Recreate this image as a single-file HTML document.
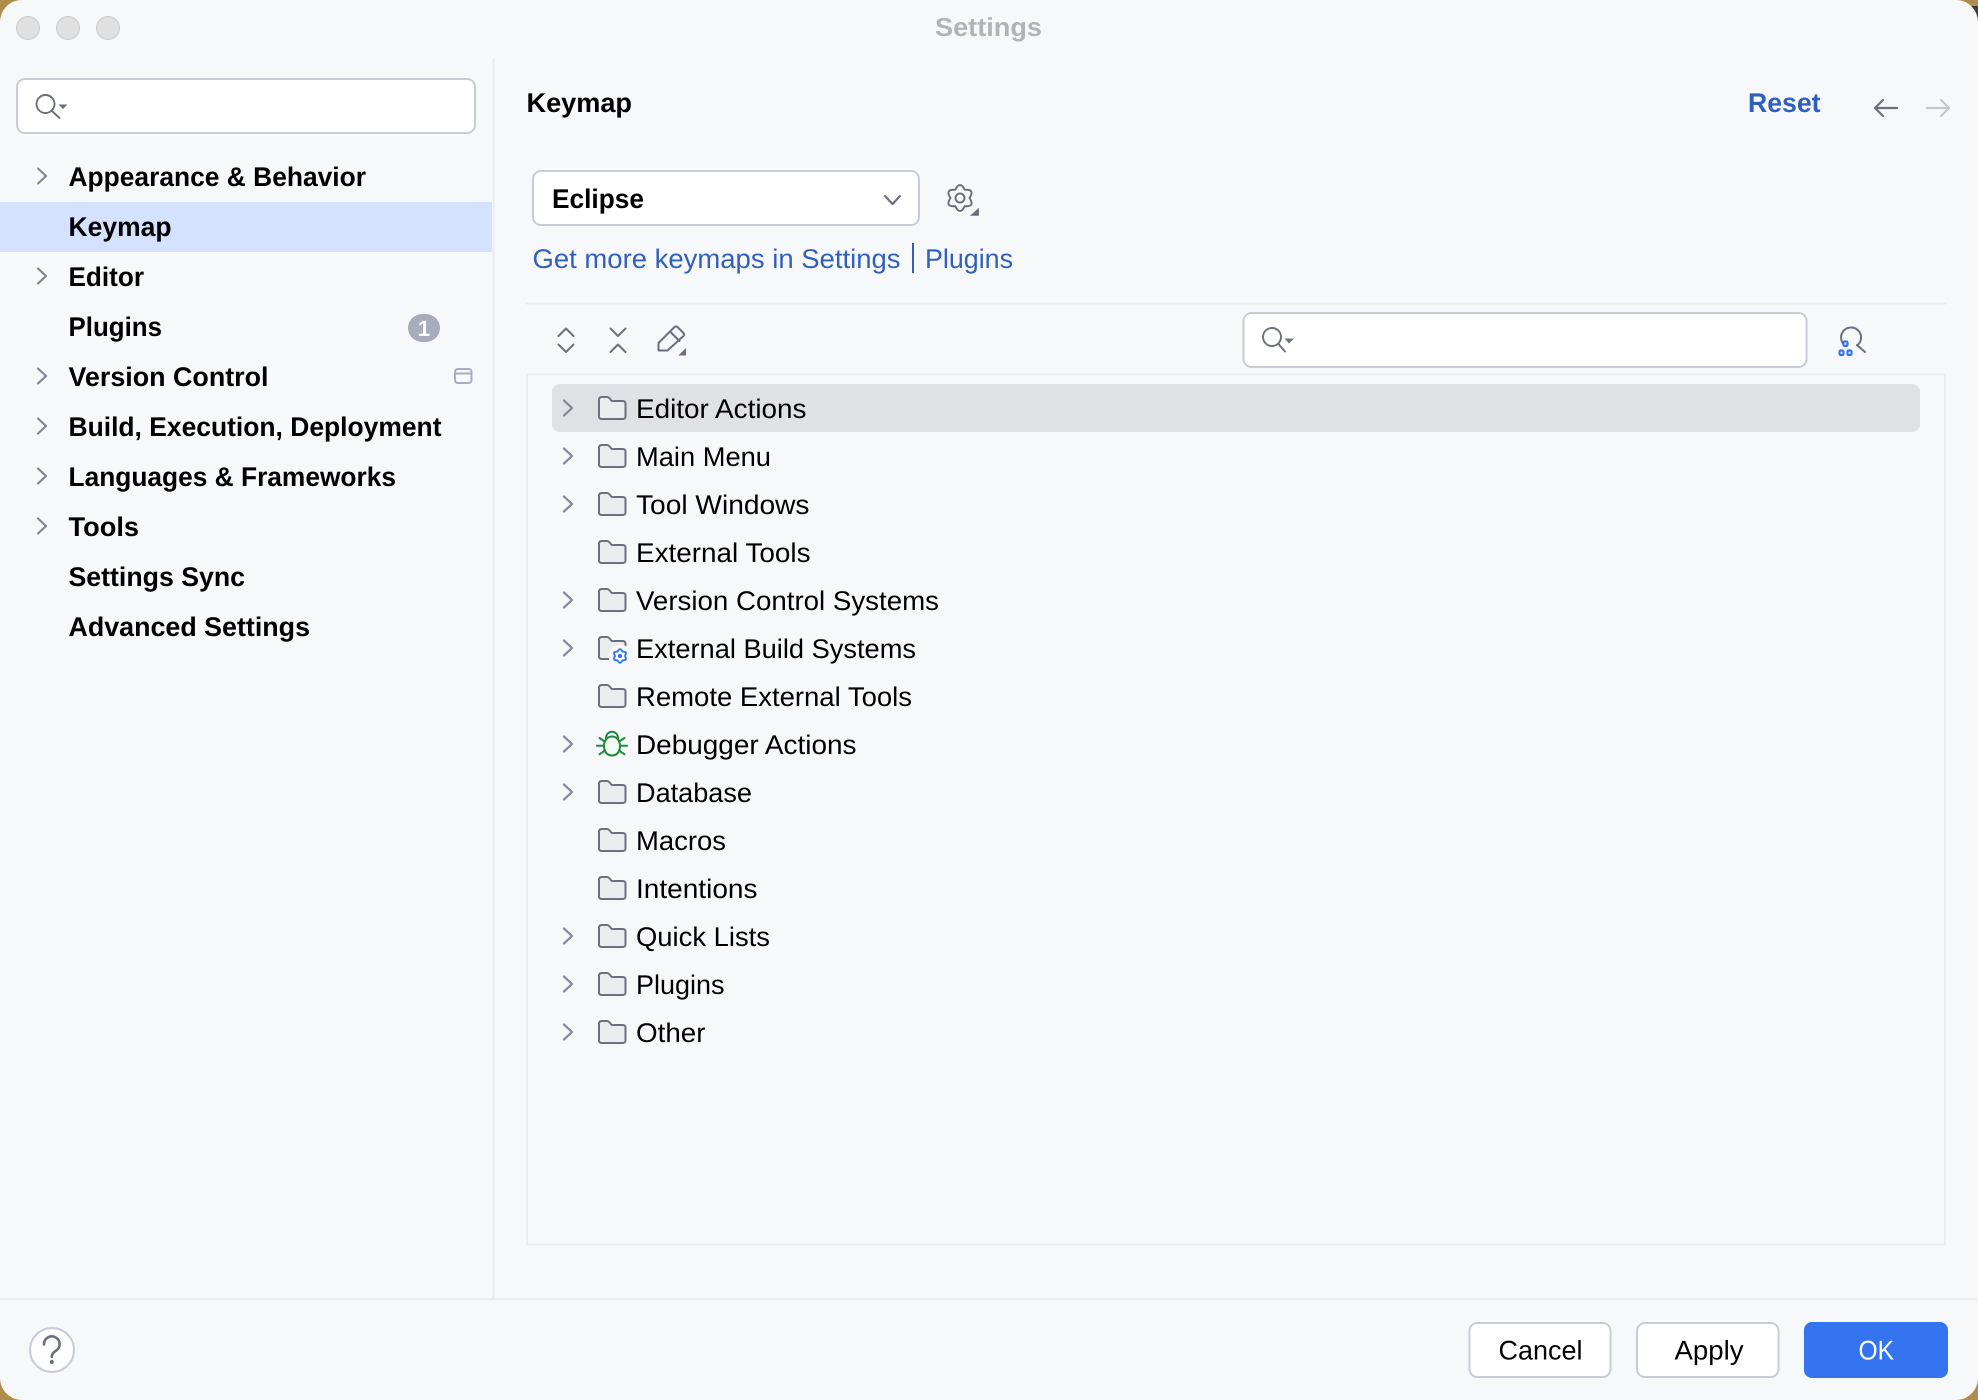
<!DOCTYPE html>
<html lang="en"><head><meta charset="utf-8"><title>Settings</title>
<style>
html,body{margin:0;padding:0;width:1978px;height:1400px;overflow:hidden;background:#b08c4c}
svg{display:block}
text{font-family:"Liberation Sans",sans-serif;font-size:27px;fill:#000;text-rendering:geometricPrecision}
.b{font-weight:700}
.l{fill:#315fbd}
.ic{fill:none;stroke:#6c707e;stroke-width:2;stroke-linecap:round;stroke-linejoin:round}
.ch{fill:none;stroke:#818594;stroke-width:2.2;stroke-linecap:round;stroke-linejoin:round}
.f{fill:#ebecf0;stroke:#6c707e;stroke-width:2;stroke-linejoin:round}
.fld{fill:#fff;stroke:#c9ccd6;stroke-width:2}
</style></head><body>
<svg xmlns="http://www.w3.org/2000/svg" width="1978" height="1400" viewBox="0 0 1978 1400">
<defs>
<path id="folder" d="M1,20 V3 a2.5,2.5 0 0 1 2.5,-2.5 h5.5 a3,3 0 0 1 2.2,1 l2.6,3 h11.2 a2.5,2.5 0 0 1 2.5,2.5 v13 a2.5,2.5 0 0 1 -2.5,2.5 h-21.5 a2.5,2.5 0 0 1 -2.5,-2.5 z"/>
<path id="chev" d="M0,-7.5 L8,0 L0,7.5"/>
<path id="gear" d="M4.75,-8.2 Q0,-17.8 -4.75,-8.2 Q-15.4,-8.9 -9.5,0 Q-15.4,8.9 -4.75,8.2 Q0,17.8 4.75,8.2 Q15.4,8.9 9.5,0 Q15.4,-8.9 4.75,-8.2 Z"/>
</defs>

<!-- window -->
<rect x="1970" y="6" width="8" height="34" fill="#3c3a38"/>
<rect x="0" y="0" width="1978" height="1400" rx="22" ry="22" fill="#f7f8fa"/>

<!-- title bar -->
<circle cx="28" cy="28" r="11.5" fill="#e0e0e0" stroke="#d0d0d0" stroke-width="1.2"/>
<circle cx="68" cy="28" r="11.5" fill="#e0e0e0" stroke="#d0d0d0" stroke-width="1.2"/>
<circle cx="108" cy="28" r="11.5" fill="#e0e0e0" stroke="#d0d0d0" stroke-width="1.2"/>
<text class="b" x="935" y="36" textLength="107" lengthAdjust="spacingAndGlyphs" style="fill:#b2b3b5;font-size:26px">Settings</text>

<!-- dividers -->
<rect x="492.5" y="58" width="2" height="1241" fill="#ebecf0"/>
<rect x="0" y="1298" width="1978" height="2" fill="#ebecf0"/>

<!-- sidebar search -->
<rect class="fld" x="17" y="79" width="458" height="54" rx="8"/>
<circle class="ic" cx="45.5" cy="104" r="9" style="stroke-width:1.9"/>
<path class="ic" d="M52,111 L59.5,118" style="stroke-width:1.9"/>
<path d="M58.5,104.5 H67.5 L63,109 Z" fill="#6c707e"/>

<!-- sidebar items -->
<rect x="0" y="202" width="492" height="50" fill="#d4e2ff"/>
<use href="#chev" class="ch" x="38" y="176"/>
<use href="#chev" class="ch" x="38" y="276"/>
<use href="#chev" class="ch" x="38" y="376"/>
<use href="#chev" class="ch" x="38" y="426"/>
<use href="#chev" class="ch" x="38" y="476"/>
<use href="#chev" class="ch" x="38" y="526"/>
<text class="b" x="68.5" y="186" textLength="297.5" lengthAdjust="spacingAndGlyphs">Appearance &amp; Behavior</text>
<text class="b" x="68.5" y="236" textLength="103" lengthAdjust="spacingAndGlyphs">Keymap</text>
<text class="b" x="68.5" y="286" textLength="75.5" lengthAdjust="spacingAndGlyphs">Editor</text>
<text class="b" x="68.5" y="336" textLength="93.5" lengthAdjust="spacingAndGlyphs">Plugins</text>
<text class="b" x="68.5" y="386" textLength="200" lengthAdjust="spacingAndGlyphs">Version Control</text>
<text class="b" x="68.5" y="436" textLength="373" lengthAdjust="spacingAndGlyphs">Build, Execution, Deployment</text>
<text class="b" x="68.5" y="486" textLength="327.5" lengthAdjust="spacingAndGlyphs">Languages &amp; Frameworks</text>
<text class="b" x="68.5" y="536" textLength="70.5" lengthAdjust="spacingAndGlyphs">Tools</text>
<text class="b" x="68.5" y="586" textLength="176.5" lengthAdjust="spacingAndGlyphs">Settings Sync</text>
<text class="b" x="68.5" y="636" textLength="241.5" lengthAdjust="spacingAndGlyphs">Advanced Settings</text>
<rect x="408" y="314" width="32" height="28" rx="14" fill="#a8adbd"/>
<text class="b" x="424" y="336" text-anchor="middle" style="fill:#fff;font-size:22px">1</text>
<rect x="455" y="369" width="16.5" height="14" rx="3" fill="none" stroke="#a8adbd" stroke-width="2"/>
<path d="M455,373.5 H471.5" stroke="#a8adbd" stroke-width="2"/>

<!-- header -->
<text class="b" x="526.5" y="112" textLength="105.5" lengthAdjust="spacingAndGlyphs">Keymap</text>
<text class="b l" x="1748" y="112" textLength="72.5" lengthAdjust="spacingAndGlyphs">Reset</text>
<path class="ic" d="M1897,108 H1875 M1883,100 L1875,108 L1883,116" style="stroke-width:2.2"/>
<path class="ic" d="M1927,108 H1949 M1941,100 L1949,108 L1941,116" style="stroke:#c6c7ca;stroke-width:2.2"/>

<!-- keymap combo -->
<rect class="fld" x="533" y="171" width="386" height="54" rx="8"/>
<text class="b" x="552" y="208" textLength="92" lengthAdjust="spacingAndGlyphs">Eclipse</text>
<path class="ch" d="M885,196 L892.5,204 L900,196" style="stroke:#6c707e"/>
<use href="#gear" class="ic" x="960" y="198"/>
<circle class="ic" cx="960" cy="198" r="4.5"/>
<path d="M970,215.7 H979 V207.7 Z" fill="#6c707e"/>

<!-- links -->
<text class="l" x="532.5" y="268" textLength="368" lengthAdjust="spacingAndGlyphs">Get more keymaps in Settings</text>
<rect x="912" y="243" width="2" height="30" fill="#315fbd"/>
<text class="l" x="925" y="268" textLength="88" lengthAdjust="spacingAndGlyphs">Plugins</text>

<rect x="526" y="302.5" width="1420" height="2" fill="#ebecf0"/>

<!-- toolbar -->
<path class="ic" d="M558.5,336 L566,328.5 L573.5,336 M558.5,344.5 L566,352 L573.5,344.5"/>
<path class="ic" d="M610.5,328.5 L618,336 L625.5,328.5 M610.5,352 L618,344.5 L625.5,352"/>
<path class="ic" d="M658.5,350.5 V343 L674.5,327 a2.2,2.2 0 0 1 3,0 l6,6 a2.2,2.2 0 0 1 0,3 L667.5,350.5 Z M670,331.5 L679.5,341"/>
<path d="M678.3,355.5 H686 V348 Z" fill="#6c707e"/>

<!-- keymap search -->
<rect class="fld" x="1243.5" y="313" width="563" height="54" rx="8"/>
<circle class="ic" cx="1272" cy="337" r="9" style="stroke-width:1.9"/>
<path class="ic" d="M1278.5,344 L1285,351.5" style="stroke-width:1.9"/>
<path d="M1284.5,338.5 H1294 L1289,343.5 Z" fill="#6c707e"/>
<path class="ic" d="M1844.5,345 A10,10 0 1 1 1857,345.5 M1857,345 L1865,352"/>
<rect x="1843.5" y="341.5" width="4" height="4.5" rx="1.2" fill="#f7f8fa" stroke="#3574f0" stroke-width="2.2"/>
<rect x="1839.5" y="350.5" width="4" height="4.5" rx="1.2" fill="#f7f8fa" stroke="#3574f0" stroke-width="2.2"/>
<rect x="1847.5" y="350.5" width="4" height="4.5" rx="1.2" fill="#f7f8fa" stroke="#3574f0" stroke-width="2.2"/>

<!-- tree -->
<rect x="527" y="374.5" width="1418" height="870" fill="none" stroke="#ebecf0" stroke-width="2"/>
<rect x="552" y="384" width="1368" height="48" rx="8" fill="#dfe1e5"/>

<use href="#chev" class="ch" x="564" y="408"/>
<use href="#chev" class="ch" x="564" y="456"/>
<use href="#chev" class="ch" x="564" y="504"/>
<use href="#chev" class="ch" x="564" y="600"/>
<use href="#chev" class="ch" x="564" y="648"/>
<use href="#chev" class="ch" x="564" y="744"/>
<use href="#chev" class="ch" x="564" y="792"/>
<use href="#chev" class="ch" x="564" y="936"/>
<use href="#chev" class="ch" x="564" y="984"/>
<use href="#chev" class="ch" x="564" y="1032"/>

<use href="#folder" class="f" x="598" y="396.5"/>
<use href="#folder" class="f" x="598" y="444.5"/>
<use href="#folder" class="f" x="598" y="492.5"/>
<use href="#folder" class="f" x="598" y="540.5"/>
<use href="#folder" class="f" x="598" y="588.5"/>
<use href="#folder" class="f" x="598" y="636.5"/>
<use href="#folder" class="f" x="598" y="684.5"/>
<use href="#folder" class="f" x="598" y="780.5"/>
<use href="#folder" class="f" x="598" y="828.5"/>
<use href="#folder" class="f" x="598" y="876.5"/>
<use href="#folder" class="f" x="598" y="924.5"/>
<use href="#folder" class="f" x="598" y="972.5"/>
<use href="#folder" class="f" x="598" y="1020.5"/>

<!-- gear badge on External Build Systems -->
<circle cx="620" cy="656" r="11.5" fill="#f7f8fa"/>
<use href="#gear" x="0" y="0" transform="translate(620,656) scale(.52)" fill="#fff" stroke="#3574f0" stroke-width="3.6" stroke-linejoin="round"/>
<circle cx="620" cy="656" r="2.2" fill="#3574f0"/>

<!-- bug -->
<g fill="none" stroke="#208a3c" stroke-width="2" stroke-linecap="round" stroke-linejoin="round">
<path d="M606,738.5 C606,729.5 618,729.5 618,738.5"/>
<path d="M612,736.5 C617,736.5 620,741 620,746 C620,751.5 617,755.5 612,755.5 C607,755.5 604,751.5 604,746 C604,741 607,736.5 612,736.5 Z" fill="#f2fcf3"/>
<path d="M599.5,738 L604.8,741.5 M597,745.7 H604 M599.5,754.3 L605,750.5 M624.5,738 L619.2,741.5 M627,745.7 H620 M624.5,754.3 L619,750.5"/>
</g>

<text x="636" y="418" textLength="170.5" lengthAdjust="spacingAndGlyphs">Editor Actions</text>
<text x="636" y="466" textLength="135" lengthAdjust="spacingAndGlyphs">Main Menu</text>
<text x="636" y="514" textLength="173.5" lengthAdjust="spacingAndGlyphs">Tool Windows</text>
<text x="636" y="562" textLength="174.5" lengthAdjust="spacingAndGlyphs">External Tools</text>
<text x="636" y="610" textLength="303" lengthAdjust="spacingAndGlyphs">Version Control Systems</text>
<text x="636" y="658" textLength="280" lengthAdjust="spacingAndGlyphs">External Build Systems</text>
<text x="636" y="706" textLength="276" lengthAdjust="spacingAndGlyphs">Remote External Tools</text>
<text x="636" y="754" textLength="220.5" lengthAdjust="spacingAndGlyphs">Debugger Actions</text>
<text x="636" y="802" textLength="116" lengthAdjust="spacingAndGlyphs">Database</text>
<text x="636" y="850" textLength="90" lengthAdjust="spacingAndGlyphs">Macros</text>
<text x="636" y="898" textLength="121.5" lengthAdjust="spacingAndGlyphs">Intentions</text>
<text x="636" y="946" textLength="134" lengthAdjust="spacingAndGlyphs">Quick Lists</text>
<text x="636" y="994" textLength="88.5" lengthAdjust="spacingAndGlyphs">Plugins</text>
<text x="636" y="1042" textLength="69.5" lengthAdjust="spacingAndGlyphs">Other</text>

<!-- footer -->
<circle cx="52" cy="1350" r="22" fill="#fdfdfe" stroke="#c9ccd6" stroke-width="2"/>
<path class="ic" d="M44,1344.5 a7.8,7.8 0 1 1 12.3,6 c-3,2.2 -4.5,3.2 -4.5,6.2" style="stroke-width:2.6"/>
<circle cx="51.8" cy="1362" r="2.1" fill="#6c707e"/>

<rect class="fld" x="1469.5" y="1323" width="141" height="54" rx="8"/>
<text x="1498.5" y="1359.5" textLength="84" lengthAdjust="spacingAndGlyphs">Cancel</text>
<rect class="fld" x="1637" y="1323" width="141.5" height="54" rx="8"/>
<text x="1674.5" y="1359.5" textLength="69" lengthAdjust="spacingAndGlyphs">Apply</text>
<rect x="1804" y="1322" width="144" height="56" rx="8" fill="#3574f0"/>
<text x="1858.5" y="1359.5" textLength="35.5" lengthAdjust="spacingAndGlyphs" style="fill:#fff">OK</text>
</svg>
</body></html>
